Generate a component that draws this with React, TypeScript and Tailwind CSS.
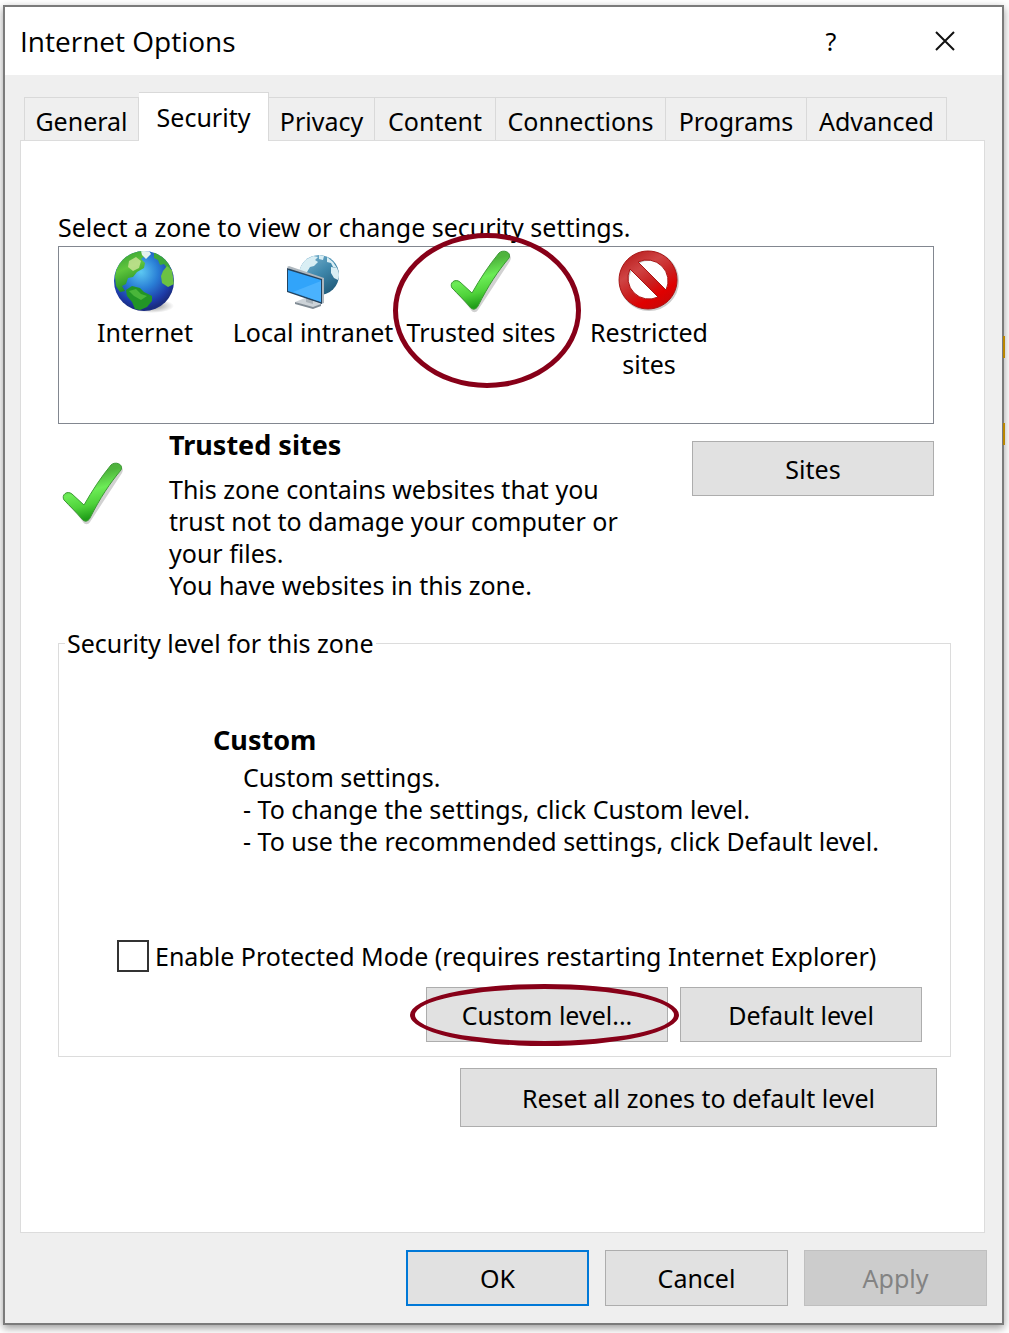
import { useState } from "react";
import type { ReactNode } from "react";
import clsx from "clsx";

const TABS = [
  { name: "General", width: "w-[115px]" },
  { name: "Security", width: "w-[130px]" },
  { name: "Privacy", width: "w-[106px]" },
  { name: "Content", width: "w-[121px]" },
  { name: "Connections", width: "w-[170px]" },
  { name: "Programs", width: "w-[141px]" },
  { name: "Advanced", width: "w-[140px]" },
];

const GlobeIcon = () => (
  <svg viewBox="0 0 62 64" className="h-16 w-[62px]" aria-hidden="true">
    <defs>
      <radialGradient id="sea" cx="0.45" cy="0.35" r="0.62">
        <stop offset="0" stopColor="#5cc8f2" />
        <stop offset="0.45" stopColor="#2a7fd6" />
        <stop offset="0.85" stopColor="#1d3aa6" />
        <stop offset="1" stopColor="#1a2c80" />
      </radialGradient>
      <radialGradient id="globeShadow">
        <stop offset="0" stopColor="#555" stopOpacity="0.7" />
        <stop offset="1" stopColor="#555" stopOpacity="0" />
      </radialGradient>
      <linearGradient id="land" x1="0" y1="0" x2="0.3" y2="1">
        <stop offset="0" stopColor="#2f9a35" />
        <stop offset="0.5" stopColor="#5fc53c" />
        <stop offset="1" stopColor="#1f8a22" />
      </linearGradient>
      <clipPath id="globeClip">
        <circle cx="30" cy="32" r="30" />
      </clipPath>
    </defs>
    <ellipse cx="38" cy="57" rx="22" ry="7" fill="url(#globeShadow)" />
    <circle cx="30" cy="32" r="30" fill="url(#sea)" />
    <g clipPath="url(#globeClip)">
      <path
        d="M1 28C2 16 9 7 19 3l10-2 3 5-5 4 4 4-1 5-7 4-4 5-5 1-2 6-4 2 3 5-5 1-4-6z"
        fill="url(#land)"
      />
      <path d="M15 12l7-4 5 4-2 7-6 3-5-4z" fill="#d6e7a0" opacity="0.75" />
      <path d="M27 2l8 0 2 3-5 5-4-4z" fill="#e4f1ee" />
      <path d="M40 3l6 2 7 6 4 8-4 0-3-4-4 1-2-5-4-2z" fill="#3da83a" />
      <path d="M49 22l4-5 5 4 2 14-6 3-6-4-1-7z" fill="#6bc243" />
      <path
        d="M12 41l6-4 8 2 4 4 8 4 0 5-5 6-7 3-5-1-3-7-5-6z"
        fill="#229526"
      />
      <path d="M15 42l7-2 5 5 6 2-6 4-7-4z" fill="#49b53a" />
    </g>
  </svg>
);

const IntranetIcon = () => (
  <svg viewBox="0 0 62 64" className="h-16 w-[62px]" aria-hidden="true">
    <defs>
      <linearGradient id="paleSea" x1="0.1" y1="0" x2="0.8" y2="1">
        <stop offset="0" stopColor="#7fb6d2" />
        <stop offset="0.5" stopColor="#3f88ac" />
        <stop offset="1" stopColor="#1f5877" />
      </linearGradient>
      <clipPath id="paleClip">
        <circle cx="37" cy="26" r="20" />
      </clipPath>
    </defs>
    <circle cx="37" cy="26" r="20" fill="url(#paleSea)" />
    <g clipPath="url(#paleClip)" fill="#d9eef4">
      <path d="M17 20l6-9 8-4 5 1-3 3 3 2-4 4-4 1-3 5-6 1z" />
      <path d="M37 6l5 1-1 4-4-1zM45 8l6 5 4 6-4-1-2-4-4-1z" />
      <path d="M49 18l6 1 3 7-2 5-4-2-3-5z" />
    </g>
    <path d="M13 53l10-4 16 6-8 4z" fill="#cdd3d8" />
    <path d="M13 53l18 5 8-3v2l-8 3-18-5z" fill="#818b94" />
    <path d="M24 47l7 2v6l-7-2z" fill="#aab3ba" />
    <path d="M5 18l2-1 35 12v25l-3 1z" fill="#aeb7be" />
    <path d="M5 19l35 11v25L5 43z" fill="#25435e" />
    <path d="M6 21l33 10v22L6 42z" fill="#31a4fa" />
    <path d="M39 32L11 43 39 53z" fill="#55b8ff" opacity="0.7" />
  </svg>
);

const CheckIcon = ({ id }: { id: string }) => (
  <svg viewBox="0 0 62 64" className="h-16 w-[62px] shrink-0" aria-hidden="true">
    <defs>
      <linearGradient id={id} x1="0" y1="0" x2="0.25" y2="1">
        <stop offset="0" stopColor="#4fa83f" />
        <stop offset="0.3" stopColor="#4fb53d" />
        <stop offset="0.55" stopColor="#6cec56" />
        <stop offset="0.78" stopColor="#4fd23a" />
        <stop offset="1" stopColor="#1f9d18" />
      </linearGradient>
    </defs>
    <path
      d="M2 38C1 33 7 30 12 34L21 43 49 4C52 0 63 3 59 10L27 59C25 62 22 62 20 59 15 52 9 46 4 41z"
      transform="translate(1 2)"
      fill="#000"
      opacity="0.18"
    />
    <path
      d="M2 39C-1 34 5 29 10 33L22 44C30 30 39 16 49 4 53 0 62 3 59 9 48 22 38 37 28 57 26 61 22 61 20 58 14 51 8 45 2 39z"
      fill={`url(#${id})`}
      stroke="#3d9a35"
      strokeWidth="1"
    />
  </svg>
);

const RestrictedIcon = () => (
  <svg viewBox="0 0 62 64" className="h-16 w-[62px]" aria-hidden="true">
    <defs>
      <linearGradient id="ban" x1="0.2" y1="0" x2="0.8" y2="1">
        <stop offset="0" stopColor="#b81c1c" />
        <stop offset="0.3" stopColor="#cf4444" />
        <stop offset="0.55" stopColor="#c92020" />
        <stop offset="0.75" stopColor="#e00000" />
        <stop offset="1" stopColor="#c40808" />
      </linearGradient>
    </defs>
    <circle cx="31" cy="32" r="25" fill="none" stroke="#ccc" strokeWidth="10" />
    <path
      fillRule="evenodd"
      fill="url(#ban)"
      stroke="#a81414"
      strokeWidth="1"
      d="M30 2a29 29 0 1 0 .1 0zM20 13a21 21 0 0 1 28 28zM12 20a21 21 0 0 0 28 28z"
    />
  </svg>
);

// Hand-drawn style marker that sits over whatever it circles
const Ring = ({ className }: { className: string }) => (
  <span
    className={clsx(
      "pointer-events-none absolute z-10 rounded-[50%] border-[5px] border-[#870018]",
      className
    )}
  />
);

const DialogButton = ({
  className,
  disabled,
  children,
}: {
  className: string;
  disabled?: boolean;
  children: ReactNode;
}) => (
  <button
    type="button"
    disabled={disabled}
    className={clsx(
      "text-center",
      disabled ? "bg-[#cccccc] text-[#838383]" : "bg-[#e1e1e1]",
      className
    )}
  >
    {children}
  </button>
);

const Zone = ({ icon, children }: { icon: ReactNode; children: ReactNode }) => (
  <li className="relative flex w-[168px] flex-col items-center whitespace-nowrap text-center">
    {icon}
    <span className="mt-[3px]">{children}</span>
  </li>
);

export default function App() {
  const [activeTab, setActiveTab] = useState("Security");
  const [protectedMode, setProtectedMode] = useState(false);

  return (
    <div className="relative flex min-h-screen flex-col overflow-hidden bg-white pt-[5px] pr-[5px] pb-2 pl-[3px] font-['Noto_Sans',sans-serif] text-[25px] leading-8 text-black">
      <div className="flex flex-1 flex-col border-2 border-[#7b7b7b] bg-[#efefef] shadow-[0_3px_8px_rgba(0,0,0,0.4)]">
        <header className="flex h-[68px] items-center bg-white pl-[15px]">
          <h1 className="flex-1 font-['Open_Sans','Noto_Sans',sans-serif] text-[28px]">
            Internet Options
          </h1>
          <button type="button" aria-label="Help" className="w-[112px]">
            ?
          </button>
          <button
            type="button"
            aria-label="Close"
            className="flex w-[115px] justify-center"
          >
            <svg viewBox="0 0 20 20" className="size-5" stroke="#111" strokeWidth="2">
              <path d="M1 1l18 18M19 1L1 19" />
            </svg>
          </button>
        </header>

        <main className="flex flex-1 flex-col pt-[17px] pr-[15px] pl-[15px]">
          <div role="tablist" className="flex h-12 items-end pl-1">
            {TABS.map((tab, i) => (
              <button
                key={tab.name}
                type="button"
                role="tab"
                aria-selected={tab.name === activeTab}
                onClick={() => setActiveTab(tab.name)}
                className={clsx(
                  "shrink-0 border-t border-r border-[#d9d9d9]",
                  tab.width,
                  i === 0 && "border-l",
                  tab.name === activeTab
                    ? "relative -mb-px h-[49px] bg-white"
                    : "h-[43px] pt-1"
                )}
              >
                {tab.name}
              </button>
            ))}
          </div>

          <section
            role="tabpanel"
            className="mr-[2px] flex flex-1 flex-col border border-[#dcdcdc] bg-white pt-[70px] pr-[33px] pl-[37px]"
          >
            <p>Select a zone to view or change security settings.</p>
            <ul className="mt-[3px] mr-[17px] flex h-[178px] border border-[#828790] pt-[2px] pl-[2px]">
              <Zone icon={<GlobeIcon />}>Internet</Zone>
              <Zone icon={<IntranetIcon />}>Local intranet</Zone>
              <Zone icon={<CheckIcon id="checkZone" />}>
                Trusted sites
                <Ring className="-top-4 -left-1 h-[155px] w-[188px]" />
              </Zone>
              <Zone icon={<RestrictedIcon />}>
                Restricted
                <br />
                sites
              </Zone>
            </ul>

            <div className="mr-[17px] flex pt-[5px]">
              <div className="w-[111px] pt-8 pl-1">
                <CheckIcon id="checkInfo" />
              </div>
              <div className="flex-1">
                <h2 className="text-[27px] leading-8 font-bold">Trusted sites</h2>
                <p className="mt-3 whitespace-nowrap">
                  This zone contains websites that you
                  <br />
                  trust not to damage your computer or
                  <br />
                  your files.
                  <br />
                  You have websites in this zone.
                </p>
              </div>
              <DialogButton className="mt-3 h-[55px] w-[242px] border border-[#adadad]">
                Sites
              </DialogButton>
            </div>

            <fieldset className="mt-[26px] border border-[#dcdcdc] pr-7 pb-[14px]">
              <legend className="ml-[6px] px-[2px]">
                Security level for this zone
              </legend>
              <div className="pt-[65px] pl-[154px]">
                <h2 className="text-[27px] leading-8 font-bold">Custom</h2>
                <p className="mt-[5px] pl-[30px] whitespace-nowrap">
                  Custom settings.
                  <br />
                  - To change the settings, click Custom level.
                  <br />- To use the recommended settings, click Default level.
                </p>
              </div>
              <label className="mt-[83px] ml-[58px] flex items-center gap-[6px] whitespace-nowrap">
                <input
                  type="checkbox"
                  checked={protectedMode}
                  onChange={(e) => setProtectedMode(e.target.checked)}
                  className="size-8 shrink-0 appearance-none border-2 border-[#333] bg-white checked:bg-[#333]"
                />
                Enable Protected Mode (requires restarting Internet Explorer)
              </label>
              <div className="mt-[15px] flex justify-end gap-3">
                <div className="relative">
                  <DialogButton className="h-[55px] w-[242px] border border-[#adadad]">
                    Custom level...
                  </DialogButton>
                  <Ring className="-top-[3px] -left-4 h-[62px] w-[269px]" />
                </div>
                <DialogButton className="h-[55px] w-[242px] border border-[#adadad]">
                  Default level
                </DialogButton>
              </div>
            </fieldset>

            <DialogButton className="mt-[11px] mr-[14px] h-[59px] w-[477px] self-end border border-[#adadad]">
              Reset all zones to default level
            </DialogButton>
          </section>

          <footer className="flex justify-end gap-4 py-[17px]">
            <DialogButton className="h-14 w-[183px] border-2 border-[#0078d7]">
              OK
            </DialogButton>
            <DialogButton className="h-14 w-[183px] border border-[#adadad]">
              Cancel
            </DialogButton>
            <DialogButton
              disabled
              className="h-14 w-[183px] border border-[#bfbfbf]"
            >
              Apply
            </DialogButton>
          </footer>
        </main>
      </div>

      {/* Slivers of the window behind the dialog */}
      <span className="absolute top-[336px] right-1 h-[22px] w-[2px] bg-[#b98600]" />
      <span className="absolute top-[423px] right-1 h-[22px] w-[2px] bg-[#b98600]" />
    </div>
  );
}
